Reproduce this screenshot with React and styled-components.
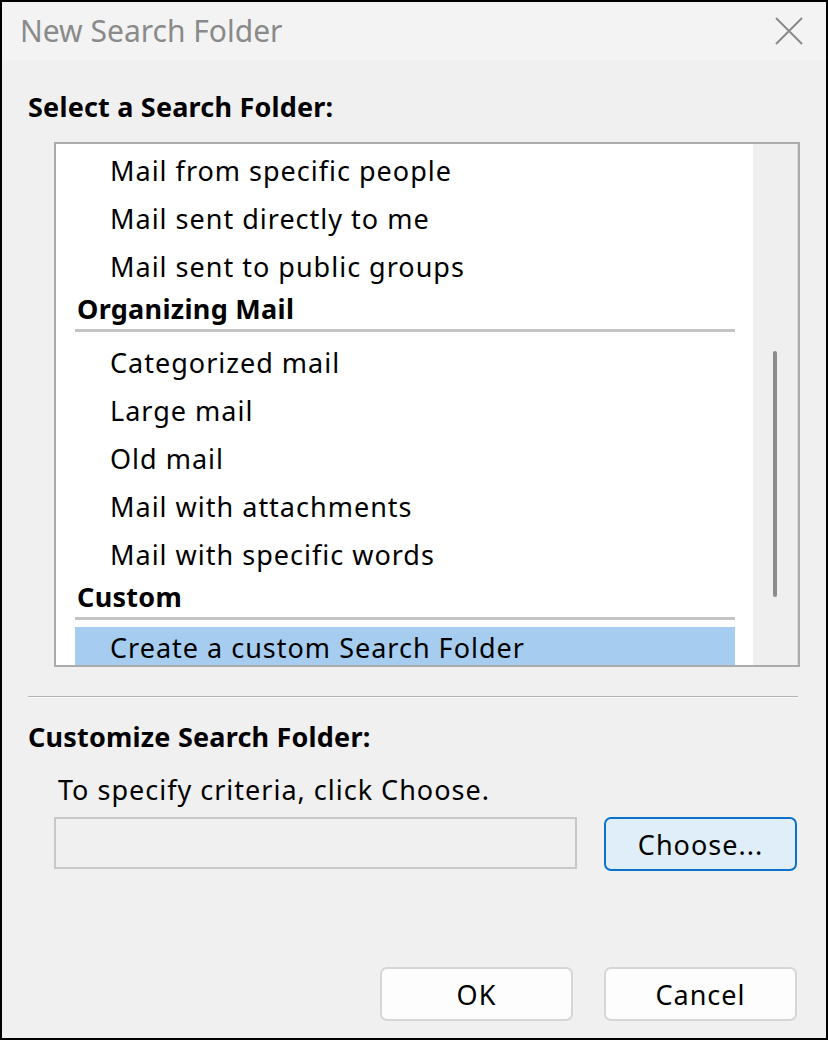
import React from "react";
import styled, { createGlobalStyle } from "styled-components";

const GlobalStyle = createGlobalStyle`
  html, body {
    margin: 0;
    padding: 0;
    background: #000;
  }
  * {
    box-sizing: border-box;
  }
`;

const Dialog = styled.div`
  width: 828px;
  height: 1040px;
  border: 2px solid #000;
  background: #f0f0f0;
  display: flex;
  flex-direction: column;
  font-family: "Noto Sans", "Open Sans", sans-serif;
  color: #000;
`;

const TitleBar = styled.div`
  height: 58px;
  flex: none;
  display: flex;
  align-items: center;
  justify-content: space-between;
  padding: 0 22px 0 18px;
  background: #f3f3f3;
  .title {
    font-size: 30px;
    line-height: 54px;
    color: #8a8a8a;
  }
`;

const Body = styled.div`
  flex: 1;
  display: flex;
  flex-direction: column;
  padding: 0 28px 0 26px;
`;

const SectionLabel = styled.div`
  font-size: 27px;
  font-weight: 700;
  line-height: 30px;
  margin-top: ${(p) => p.$top}px;
  letter-spacing: 0.2px;
`;

const ListBox = styled.div`
  margin-top: 20px;
  margin-left: 26px;
  width: 746px;
  height: 525px;
  border: 2px solid #ababab;
  background: #fff;
  display: flex;
  overflow: hidden;
`;

const ListContent = styled.div`
  flex: 1;
  padding: 3px 18px 0 19px;
  overflow: hidden;
`;

const Item = styled.div`
  height: ${(p) => (p.$selected ? 38 : 48)}px;
  display: flex;
  align-items: ${(p) => (p.$selected ? "flex-end" : "center")};
  padding-left: 35px;
  font-size: 27px;
  line-height: 34px;
  background: ${(p) => (p.$selected ? "#a6cdf0" : "transparent")};
  letter-spacing: 1px;
  white-space: nowrap;
`;

const Group = styled.div`
  height: 48px;
  display: flex;
  flex-direction: column;
  .name {
    height: 38px;
    display: flex;
    align-items: center;
    padding: 0 0 4px 2px;
    font-size: 27px;
    font-weight: 700;
    letter-spacing: 0.3px;
  }
  .rule {
    height: 3px;
    background: #c4c4c4;
  }
`;

const ScrollTrack = styled.div`
  width: 45px;
  flex: none;
  background: #efefef;
  border-right: 1px solid #dcdcdc;
  padding-top: 207px;
  display: flex;
  justify-content: center;
  .thumb {
    width: 4px;
    height: 246px;
    border-radius: 2px;
    background: #8c8c8c;
  }
`;

const Separator = styled.div`
  margin-top: 29px;
  height: 2px;
  background: #b4b4b4;
  border-bottom: 1px solid #fafafa;
`;

const Hint = styled.div`
  margin-top: 23px;
  margin-left: 30px;
  font-size: 27px;
  line-height: 30px;
  letter-spacing: 1px;
`;

const ChooseRow = styled.div`
  margin-top: 12px;
  margin-left: 26px;
  display: flex;
  align-items: flex-start;
  gap: 27px;
`;

const Field = styled.div`
  width: 523px;
  height: 52px;
  border: 2px solid #c8c8c8;
  background: #f0f0f0;
`;

const Button = styled.button`
  width: 193px;
  height: 54px;
  border-radius: 7px;
  font-family: inherit;
  font-size: 27px;
  letter-spacing: 1px;
  color: #000;
  padding: 0;
  border: ${(p) => (p.$primary ? "2px solid #0a72cc" : "2px solid #d6d6d6")};
  background: ${(p) => (p.$primary ? "#e0eef9" : "#fdfdfd")};
`;

const Footer = styled.div`
  margin-top: auto;
  margin-bottom: 17px;
  display: flex;
  justify-content: flex-end;
  gap: 31px;
  padding-right: 1px;
`;

const CloseIcon = () => (
  <svg width="30" height="30" viewBox="0 0 30 30">
    <path d="M2 2 L28 28 M28 2 L2 28" stroke="#8a8a8a" strokeWidth="2" fill="none" />
  </svg>
);

const topItems = ["Mail from specific people", "Mail sent directly to me", "Mail sent to public groups"];
const orgItems = ["Categorized mail", "Large mail", "Old mail", "Mail with attachments", "Mail with specific words"];

const App = () => {
  return (
    <>
      <GlobalStyle />
      <Dialog>
        <TitleBar>
          <span className="title">New Search Folder</span>
          <CloseIcon />
        </TitleBar>
        <Body>
          <SectionLabel $top={32}>Select a Search Folder:</SectionLabel>
          <ListBox>
            <ListContent>
              {topItems.map((t) => (
                <Item key={t}>{t}</Item>
              ))}
              <Group>
                <div className="name">Organizing Mail</div>
                <div className="rule" />
              </Group>
              {orgItems.map((t) => (
                <Item key={t}>{t}</Item>
              ))}
              <Group>
                <div className="name">Custom</div>
                <div className="rule" />
              </Group>
              <Item $selected>Create a custom Search Folder</Item>
            </ListContent>
            <ScrollTrack>
              <div className="thumb" />
            </ScrollTrack>
          </ListBox>
          <Separator />
          <SectionLabel $top={24}>Customize Search Folder:</SectionLabel>
          <Hint>To specify criteria, click Choose.</Hint>
          <ChooseRow>
            <Field />
            <Button $primary>Choose...</Button>
          </ChooseRow>
          <Footer>
            <Button>OK</Button>
            <Button>Cancel</Button>
          </Footer>
        </Body>
      </Dialog>
    </>
  );
};

export default App;
